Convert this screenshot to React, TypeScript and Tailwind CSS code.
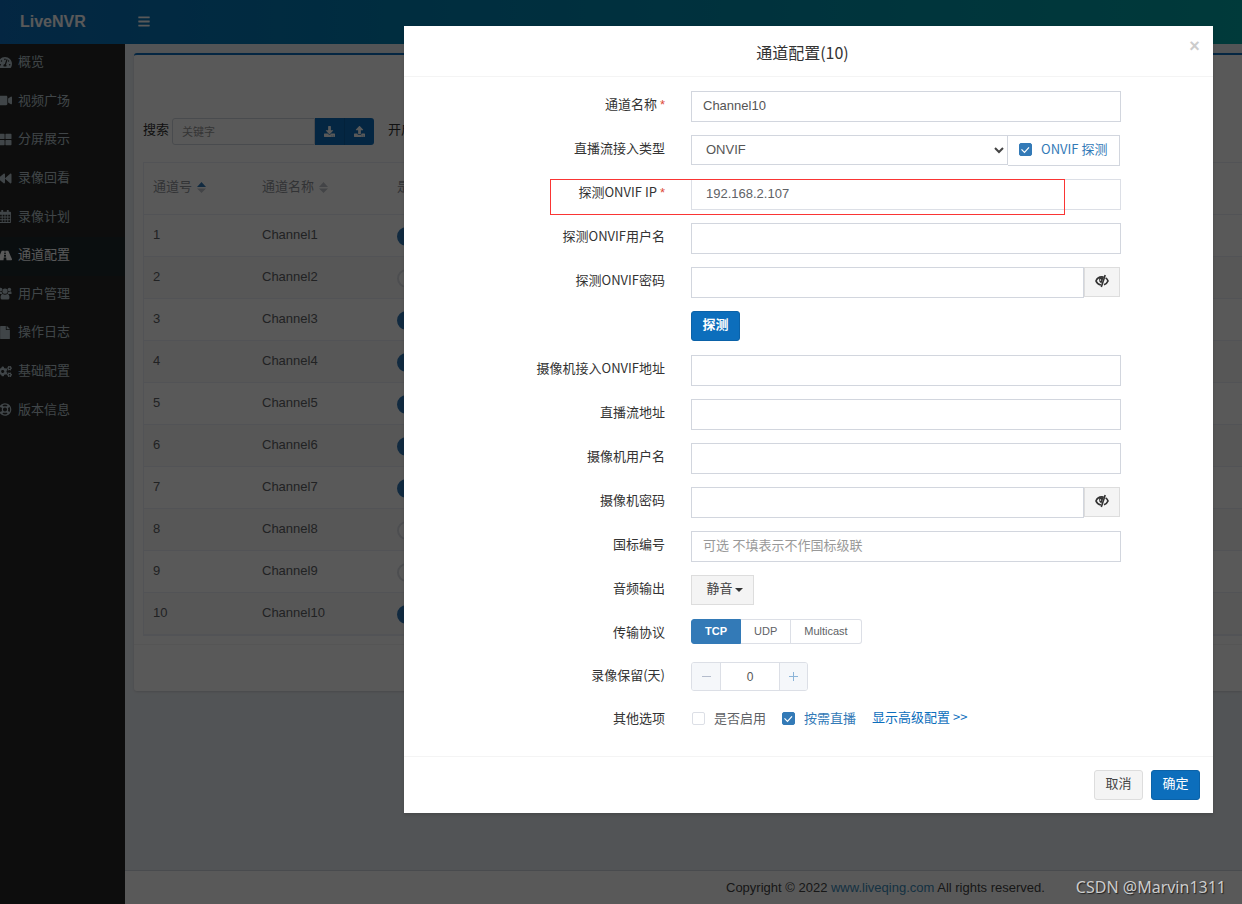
import React, { useState, ReactNode } from 'react';
import {
  FaBars,
  FaTachometerAlt,
  FaVideo,
  FaThLarge,
  FaBackward,
  FaRoad,
  FaFile,
  FaCogs,
  FaRegLifeRing,
  FaDownload,
  FaUpload,
} from 'react-icons/fa';

type IconProps = { className?: string };

const CalendarIcon = ({ className }: IconProps) => (
  <svg className={className} viewBox="0 0 14 14" fill="currentColor">
    <path
      fillRule="evenodd"
      d="M3 0h2v2h4V0h2v2h1.500q1 0 1 1v10q0 1-1 1h-11q-1 0-1-1V3q0-1 1-1H3zM1.500 5v2h2V5zM4.500 5v2h2V5zM7.500 5v2h2V5zM10.500 5v2h2V5zM1.500 8v2h2V8zM4.500 8v2h2V8zM7.500 8v2h2V8zM10.500 8v2h2V8zM1.500 11v2h2v-2zM4.500 11v2h2v-2zM7.500 11v2h2v-2zM10.500 11v2h2v-2z"
    />
  </svg>
);

const UsersIcon = ({ className }: IconProps) => (
  <svg className={className} viewBox="0 0 14 14" fill="currentColor">
    <circle cx="2.300" cy="2.600" r="1.900" />
    <circle cx="11.700" cy="2.600" r="1.900" />
    <circle cx="7" cy="4.500" r="2.800" />
    <path d="M0 7.500V6q0-1.500 1.200-1.500 1 .7 2.300.5-.2 1.500.8 2.500zM14 7.500V6q0-1.500-1.200-1.500-1 .7-2.300.5.200 1.500-.8 2.500z" />
    <path d="M2.200 11.500q0-4 2.300-4Q7 9.200 9.500 7.500q2.300 0 2.300 4 0 2-1.800 2H4q-1.800 0-1.800-2z" />
  </svg>
);

const menu = [
  { label: '概览', icon: FaTachometerAlt },
  { label: '视频广场', icon: FaVideo },
  { label: '分屏展示', icon: FaThLarge },
  { label: '录像回看', icon: FaBackward },
  { label: '录像计划', icon: CalendarIcon },
  { label: '通道配置', icon: FaRoad, active: true },
  { label: '用户管理', icon: UsersIcon },
  { label: '操作日志', icon: FaFile },
  { label: '基础配置', icon: FaCogs },
  { label: '版本信息', icon: FaRegLifeRing },
];

const channels = [
  { id: 1, enabled: true },
  { id: 2, enabled: false },
  { id: 3, enabled: true },
  { id: 4, enabled: true },
  { id: 5, enabled: true },
  { id: 6, enabled: true },
  { id: 7, enabled: true },
  { id: 8, enabled: false },
  { id: 9, enabled: false },
  { id: 10, enabled: true },
];

const inputClass =
  'block h-[31px] w-full border border-[#d2d6de] bg-white px-[11px] pb-[2px] text-[13px] text-[#555] outline-none placeholder:text-[#999]';

const EyeCloseIcon = () => (
  <svg className="h-[14px] w-[14px]" viewBox="0 0 14 14" fill="none" stroke="#333">
    <path d="M8.600 3.100C4.800 2.400 2 4.400 1 7c.8 2 2.600 3.500 4.900 4" strokeWidth="1.700" />
    <path d="M4.300 3.800C3.500 6.300 4.300 8.600 6.500 9.200L8.800 3z" fill="#333" stroke="none" />
    <path d="M10.200 1 6.300 13" strokeWidth="1.600" />
    <path d="M10.600 3.900c1.300.8 2 1.900 2.400 3.100-.7 1.700-2.100 3.100-4 3.800" strokeWidth="1.700" />
    <circle cx="5.400" cy="6" r=".8" fill="#f4f4f4" stroke="none" />
  </svg>
);

const SortIcon: React.FC<{ active?: boolean }> = ({ active }) => (
  <svg className="h-[11px] w-[9px]" viewBox="0 0 9 11">
    <path d="M0 5 4.500 0 9 5z" fill={active ? '#337ab7' : '#c0c4cc'} />
    <path d="M0 6.500h9L4.500 11z" fill="#c0c4cc" />
  </svg>
);

const Field: React.FC<{ label?: string; htmlFor?: string; required?: boolean; compact?: boolean; children: ReactNode }> = ({
  label,
  htmlFor,
  required,
  compact,
  children,
}) => (
  <div
    className={
      compact
        ? 'mb-[13px] grid h-[30px] grid-cols-[261px_minmax(0,1fr)] gap-[26px] pr-[92px]'
        : 'mb-[14px] grid h-[30px] grid-cols-[261px_minmax(0,1fr)] gap-[26px] pr-[92px]'
    }
  >
    <label htmlFor={htmlFor} className="text-right font-['Noto_Sans_CJK_SC','Liberation_Sans',sans-serif] leading-[26px] text-[#333]">
      {label}
      {required && <span className="ml-[3px] font-['Liberation_Sans',sans-serif] text-[#dd4b39]">*</span>}
    </label>
    <div>{children}</div>
  </div>
);

const PasswordInput: React.FC<{ id: string }> = ({ id }) => {
  const [visible, setVisible] = useState(false);
  return (
    <div className="flex items-start pr-px">
      <input id={id} type={visible ? 'text' : 'password'} className={inputClass} />
      <button
        type="button"
        aria-label="显示密码"
        onClick={() => setVisible(!visible)}
        className="flex h-[30px] w-9 shrink-0 justify-center border border-[#ddd] bg-[#f4f4f4] pt-[6px]"
      >
        <EyeCloseIcon />
      </button>
    </div>
  );
};

const Checkbox: React.FC<{ label: string; defaultChecked?: boolean }> = ({ label, defaultChecked }) => (
  <label className="flex items-center gap-[9px] font-['Noto_Sans_CJK_SC','Liberation_Sans',sans-serif] leading-[26px] text-[#606266] has-checked:text-[#337ab7]">
    <span className="relative flex h-[13px] w-[13px]">
      <input
        type="checkbox"
        defaultChecked={defaultChecked}
        className="peer h-[13px] w-[13px] appearance-none rounded-[2px] border border-[#dcdfe6] bg-white checked:border-[#337ab7] checked:bg-[#337ab7]"
      />
      <svg className="pointer-events-none absolute inset-0 hidden h-[13px] w-[13px] peer-checked:block" viewBox="0 0 13 13" fill="none" stroke="#fff">
        <path d="M2.500 6.300 5.500 9.300 10 4.300" strokeWidth="1.200" />
      </svg>
    </span>
    {label}
  </label>
);

const Header = () => (
  <header className="flex h-[44px] items-center bg-linear-to-r from-[#0c6ebc] to-[#00a5a5] text-white">
    <a href="#" className="w-[125px] pl-5 text-[16px] leading-5 font-bold">
      LiveNVR
    </a>
    <button type="button" aria-label="菜单" className="pb-[2px] pl-[13px]">
      <FaBars className="h-[13px] w-[12px]" />
    </button>
  </header>
);

const Sidebar = () => (
  <nav className="w-[125px] shrink-0 overflow-hidden bg-[#252525]">
    <ul className="flex h-[386px] flex-col">
      {menu.map(({ label, icon: Icon, active }) => (
        <li key={label} className="flex-1">
          <a
            href="#"
            className={
              active
                ? 'flex h-full items-center gap-[6px] bg-[#1e282c] pb-[2px] text-white'
                : 'flex h-full items-center gap-[6px] pb-[2px] text-[#b8c7ce]'
            }
          >
            <Icon className="-ml-[2px] h-[13px] w-[14px]" />
            {label}
          </a>
        </li>
      ))}
    </ul>
  </nav>
);

const ChannelTable = () => (
  <table className="w-full table-fixed border-separate border-spacing-0 border-t border-b border-l border-[#ebeef5] text-left text-[#606266]">
    <thead>
      <tr className="h-[52px] text-[#909399]">
        <th className="w-[109px] border-b border-[#ebeef5] pb-[3px] pl-[9px] font-normal">
          <span className="flex items-center gap-[5px]">
            通道号 <SortIcon active />
          </span>
        </th>
        <th className="w-[135px] border-b border-[#ebeef5] pb-[3px] pl-[9px] font-normal">
          <span className="flex items-center gap-[5px]">
            通道名称 <SortIcon />
          </span>
        </th>
        <th className="border-b border-[#ebeef5] pb-[3px] pl-[9px] font-normal">是否启用</th>
      </tr>
    </thead>
    <tbody>
      {channels.map(({ id, enabled }) => (
        <tr key={id} className="h-[42px] even:bg-[#fafafa]">
          <td className="border-b border-[#ebeef5] pb-[2px] pl-[9px]">{id}</td>
          <td className="border-b border-[#ebeef5] pb-[2px] pl-[9px]">Channel{id}</td>
          <td className="border-b border-[#ebeef5] pt-[2px] pl-[9px]">
            <input
              type="checkbox"
              role="switch"
              aria-label={`Channel${id}`}
              defaultChecked={enabled}
              className="block h-[19px] w-[37px] appearance-none rounded-full border-2 border-[#dcdfe6] bg-white checked:border-[#337ab7] checked:bg-[#337ab7]"
            />
          </td>
        </tr>
      ))}
    </tbody>
  </table>
);

const ChannelPage = () => (
  <main className="flex min-w-0 flex-1 flex-col bg-[#ecf0f5]">
    <div className="flex-1 pt-[9px] pl-[9px]">
      <section className="rounded-l-[3px] border-t-2 border-[#0c6ebc] bg-white shadow-sm">
        <div className="pt-[63px] pb-[8px] pl-[9px]">
          <div className="mb-[17px] flex items-center">
            <label htmlFor="keyword" className="-mt-1 w-[29px] text-[#333]">
              搜索
            </label>
            <input
              id="keyword"
              placeholder="关键字"
              className="h-[27px] w-[143px] rounded-l-[3px] border border-[#d2d6de] px-[9px] text-[11px] placeholder:text-[#999]"
            />
            <button type="button" aria-label="下载" className="flex h-[27px] w-[30px] items-center justify-center border-r border-[#0b62a8] bg-[#0c6ebc] text-white">
              <FaDownload size={11} />
            </button>
            <button type="button" aria-label="上传" className="flex h-[27px] w-[29px] items-center justify-center rounded-r-[3px] bg-[#0c6ebc] text-white">
              <FaUpload size={11} />
            </button>
            <span className="-mt-1 ml-[14px] text-[#333]">开启</span>
          </div>
          <ChannelTable />
        </div>
        <div className="h-[47px] border-t border-[#f4f4f4]" />
      </section>
    </div>
    <footer className="h-[34px] border-t border-[#d2d6de] bg-white pl-[601px] leading-[33px] whitespace-nowrap text-[#444]">
      Copyright © 2022{' '}
      <a href="#" className="text-[#3c8dbc]">
        www.liveqing.com
      </a>{' '}
      All rights reserved.
    </footer>
  </main>
);

const ChannelDialog = () => {
  const [protocol, setProtocol] = useState('TCP');
  const [days, setDays] = useState(0);

  return (
    <div role="dialog" aria-labelledby="dialog-title" className="w-full bg-white shadow-[0_2px_3px_rgba(0,0,0,0.13)]">
      <div className="flex h-[51px] items-center border-b border-[#f4f4f4]">
        <h4 id="dialog-title" className="flex-1 pt-px pl-3 text-center font-['Noto_Sans_CJK_SC','Liberation_Sans',sans-serif] text-[16px] leading-6 text-[#333]">
          通道配置(10)
        </h4>
        <button type="button" aria-label="关闭" className="mr-[13px] mb-[10px] w-[11px] text-[18px] leading-5 font-bold text-[#ccc]">
          ×
        </button>
      </div>

      <form className="h-[679px] pt-[14px]">
        <Field label="通道名称" htmlFor="name" required>
          <input id="name" defaultValue="Channel10" className={inputClass} />
        </Field>
        <Field label="直播流接入类型" htmlFor="type">
          <div className="flex items-start pr-px">
            <div className="relative flex-1">
              <select id="type" className="block h-[30px] w-full appearance-none border border-[#d2d6de] bg-white px-[14px] text-[#555] outline-none">
                <option>ONVIF</option>
                <option>RTSP</option>
              </select>
              <svg className="pointer-events-none absolute top-3 right-1 h-[7px] w-[10px]" viewBox="0 0 10 7" fill="none" stroke="#444" strokeWidth="2">
                <path d="M1 1 5 5 9 1" />
              </svg>
            </div>
            <div className="h-[31px] w-[112px] border border-l-0 border-[#d2d6de] pl-[11px]">
              <Checkbox label="ONVIF 探测" defaultChecked />
            </div>
          </div>
        </Field>
        <div className="relative">
          <Field label="探测ONVIF IP" htmlFor="ip" required>
            <input
              id="ip"
              defaultValue="192.168.2.107"
              className="block h-[31px] w-full border border-[#dcdfe6] bg-white px-[14px] pb-[2px] text-[#606266] outline-none"
            />
          </Field>
          <div className="pointer-events-none absolute top-0 right-[148px] left-[146px] h-9 border border-[#fa3534]" />
        </div>
        <Field label="探测ONVIF用户名" htmlFor="onvif-user">
          <input id="onvif-user" className={inputClass} />
        </Field>
        <Field label="探测ONVIF密码" htmlFor="onvif-password">
          <PasswordInput id="onvif-password" />
        </Field>
        <Field>
          <button type="button" className="block h-[30px] w-[49px] rounded-[3px] border border-[#0b62a8] bg-[#0c6ebc] pb-[3px] font-bold text-white">
            探测
          </button>
        </Field>
        <Field label="摄像机接入ONVIF地址" htmlFor="onvif-url">
          <input id="onvif-url" className={inputClass} />
        </Field>
        <Field label="直播流地址" htmlFor="stream-url">
          <input id="stream-url" className={inputClass} />
        </Field>
        <Field label="摄像机用户名" htmlFor="camera-user">
          <input id="camera-user" className={inputClass} />
        </Field>
        <Field label="摄像机密码" htmlFor="camera-password">
          <PasswordInput id="camera-password" />
        </Field>
        <Field label="国标编号" htmlFor="gb-id">
          <input id="gb-id" placeholder="可选 不填表示不作国标级联" className={inputClass} />
        </Field>
        <Field label="音频输出" htmlFor="audio">
          <button id="audio" type="button" className="flex h-[30px] w-[63px] items-center justify-center gap-[2px] border border-[#ddd] bg-[#f4f4f4] pb-[3px] pl-1 text-[#444]">
            静音
            <svg className="mt-[3px] h-1 w-2" viewBox="0 0 8 4" fill="#333">
              <path d="M0 0h8L4 4z" />
            </svg>
          </button>
        </Field>
        <Field label="传输协议" compact>
          <div className="flex text-[11px] leading-[23px] text-[#606266]">
            {['TCP', 'UDP', 'Multicast'].map((name) => (
              <label
                key={name}
                className="border border-l-0 border-[#dcdfe6] px-[13px] first:rounded-l-[3px] first:border-l last:rounded-r-[3px] has-checked:border-[#337ab7] has-checked:bg-[#337ab7] has-checked:font-bold has-checked:text-white"
              >
                <input
                  type="radio"
                  name="protocol"
                  value={name}
                  checked={protocol === name}
                  onChange={() => setProtocol(name)}
                  className="sr-only"
                />
                {name}
              </label>
            ))}
          </div>
        </Field>
        <Field label="录像保留(天)" htmlFor="days" compact>
          <div className="flex h-[29px] w-[117px] overflow-hidden rounded-[3px] border border-[#dcdfe6]">
            <button
              type="button"
              aria-label="减少"
              onClick={() => setDays(Math.max(0, days - 1))}
              className="flex w-[29px] items-center justify-center border-r border-[#dcdfe6] bg-[#f5f7fa]"
            >
              <svg className="h-[11px] w-[11px]" viewBox="0 0 11 11" stroke="#b4bccc">
                <path d="M1 5.500h9" />
              </svg>
            </button>
            <input
              id="days"
              value={days}
              onChange={(e) => setDays(Number(e.target.value) || 0)}
              className="min-w-0 flex-1 text-center text-[12px] text-[#555] outline-none"
            />
            <button
              type="button"
              aria-label="增加"
              onClick={() => setDays(days + 1)}
              className="flex w-[28px] items-center justify-center border-l border-[#dcdfe6] bg-[#f5f7fa]"
            >
              <svg className="h-[11px] w-[11px]" viewBox="0 0 11 11" stroke="#8cb4d8">
                <path d="M1 5.500h9M5.500 1v9" />
              </svg>
            </button>
          </div>
        </Field>
        <Field label="其他选项">
          <div className="flex gap-4 pl-px whitespace-nowrap">
            <Checkbox label="是否启用" />
            <Checkbox label="按需直播" defaultChecked />
            <a href="#" className="font-['Noto_Sans_CJK_SC','Liberation_Sans',sans-serif] leading-6 text-[#0c6ebc]">
              显示高级配置 &gt;&gt;
            </a>
          </div>
        </Field>
      </form>

      <div className="flex justify-end gap-2 border-t border-[#f4f4f4] p-[13px]">
        <button type="button" className="h-[30px] w-[49px] rounded-[3px] border border-[#ddd] bg-[#f4f4f4] pb-[2px] text-[#444]">
          取消
        </button>
        <button type="button" className="h-[30px] w-[49px] rounded-[3px] border border-[#0b62a8] bg-[#0c6ebc] pb-[2px] text-white">
          确定
        </button>
      </div>
    </div>
  );
};

const App: React.FC = () => (
  <div className="relative flex min-h-screen flex-col overflow-hidden font-['Liberation_Sans','Noto_Sans_CJK_SC',sans-serif] text-[13px] leading-5">
    <Header />
    <div className="flex flex-1">
      <Sidebar />
      <ChannelPage />
    </div>
    <div className="absolute inset-0 flex items-start bg-black/65 pt-[26px] pr-[29px] pl-[404px]">
      <ChannelDialog />
    </div>
    <p className="absolute right-4 bottom-[7px] font-['Noto_Sans',sans-serif] text-[16px] leading-5 text-[#ccc] [text-shadow:1px_1px_1px_#222]">
      CSDN @Marvin1311
    </p>
  </div>
);

export default App;
